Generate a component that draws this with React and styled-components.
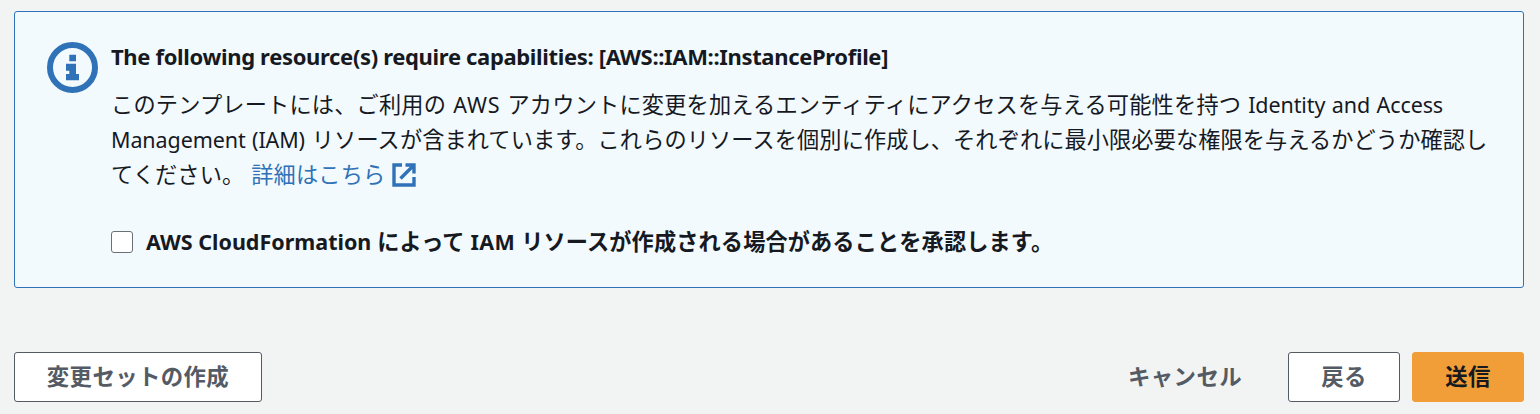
import React from "react";
import styled, { createGlobalStyle } from "styled-components";

const GlobalStyle = createGlobalStyle`
  * { box-sizing: border-box; }
  body {
    margin: 0;
    background: #f2f3f3;
    color: #16191f;
    font-family: "Noto Sans", "Noto Sans CJK JP", sans-serif;
    font-size: 22.2px;
    line-height: 35.2px;
  }
`;

const Page = styled.main`
  height: 414px;
  padding: 11px 16px 12px 14px;
  display: flex;
  flex-direction: column;
  justify-content: space-between;
  overflow: hidden;
`;

const Alert = styled.section`
  display: flex;
  gap: 13px;
  height: 277px;
  padding: 27px 24px 0 32px;
  background: #f2fafd;
  border: 1px solid #3072b8;
  border-radius: 3px;
`;

const InfoIcon = styled.svg`
  flex: none;
  width: 51px;
  height: 51px;
  margin-top: 3px;
`;

const Content = styled.div`
  flex: 1;
  white-space: nowrap;
`;

const Title = styled.h2`
  margin: 0 0 13px;
  font-size: 22px;
  font-weight: 700;
  line-height: 35px;
  letter-spacing: -0.34px;
`;

const Message = styled.p`
  margin: 0;
  word-spacing: 1px;
`;

const Line = styled.span`
  display: block;
  letter-spacing: ${(p) => p.$tracking};
`;

const Latin = styled.span`
  font-size: 21.5px;
  letter-spacing: ${(p) => p.$tracking || "-0.1px"};
`;

const Link = styled.a`
  color: #3072b8;
  text-decoration: none;
`;

const ExternalIcon = styled.svg`
  width: 24px;
  height: 24px;
  margin-left: 7px;
  vertical-align: -4px;
`;

const Acknowledge = styled.label`
  display: flex;
  align-items: center;
  gap: 13px;
  margin-top: 31px;
  font-weight: 700;
  letter-spacing: 0.12px;
`;

const Checkbox = styled.input`
  appearance: none;
  position: relative;
  top: 1px;
  width: 22px;
  height: 22px;
  margin: 0;
  background: #fff;
  border: 1.5px solid #687078;
  border-radius: 3px;
`;

const Actions = styled.footer`
  display: flex;
  justify-content: space-between;
`;

const ActionGroup = styled.div`
  display: flex;
  gap: 12px;
`;

const variants = {
  normal: "background: #fff; border-color: #545b64; color: #545b64;",
  link: "background: transparent; border-color: transparent; color: #545b64;",
  primary: "background: #f19e38; border-color: #f19e38; color: #16191f;",
};

const Button = styled.button`
  height: 50px;
  width: ${(p) => p.$width}px;
  padding: 0;
  border: 1px solid;
  border-radius: 3px;
  font: inherit;
  font-weight: 700;
  font-size: 22.4px;
  letter-spacing: 0.4px;
  white-space: nowrap;
  ${(p) => variants[p.$variant || "normal"]}
`;

export default function App() {
  return (
    <>
      <GlobalStyle />
      <Page>
        <Alert>
          <InfoIcon viewBox="0 0 51 51" fill="none">
            <circle cx="25.5" cy="25.5" r="22.5" stroke="#3072b8" strokeWidth="6" />
            <path d="M22.3 12.8h6.7v6.5h-6.7zM19 21.7h10V32h3v6.3H19V32h3.3v-3.3H19z" fill="#3072b8" />
          </InfoIcon>
          <Content>
            <Title>The following resource(s) require capabilities: [AWS::IAM::InstanceProfile]</Title>
            <Message>
              <Line $tracking="0.2px">
                このテンプレートには、ご利用の <Latin $tracking="0.9px">AWS</Latin> アカウントに変更を加えるエンティティにアクセスを与える可能性を持つ <Latin>Identity and Access</Latin>
              </Line>
              <Line $tracking="0.1px">
                <Latin>Management (IAM)</Latin> リソースが含まれています。これらのリソースを個別に作成し、それぞれに最小限必要な権限を与えるかどうか確認し
              </Line>
              <Line $tracking="0.15px">
                てください。{" "}
                <Link>
                  詳細はこちら
                  <ExternalIcon viewBox="0 0 24 24" fill="none" stroke="#3072b8" strokeWidth="3.4">
                    <path d="M10 2H2v20h20v-8M13.5 2H22v8.5M22 2L8.5 15.5" />
                  </ExternalIcon>
                </Link>
              </Line>
            </Message>
            <Acknowledge>
              <Checkbox type="checkbox" />
              <span>
                <Latin $tracking="0px">AWS CloudFormation</Latin> によって <Latin $tracking="0.4px">IAM</Latin> リソースが作成される場合があることを承認します。
              </span>
            </Acknowledge>
          </Content>
        </Alert>
        <Actions>
          <Button $width={248}>変更セットの作成</Button>
          <ActionGroup>
            <Button $variant="link" $width={182}>キャンセル</Button>
            <Button $width={112}>戻る</Button>
            <Button $variant="primary" $width={112}>送信</Button>
          </ActionGroup>
        </Actions>
      </Page>
    </>
  );
}
